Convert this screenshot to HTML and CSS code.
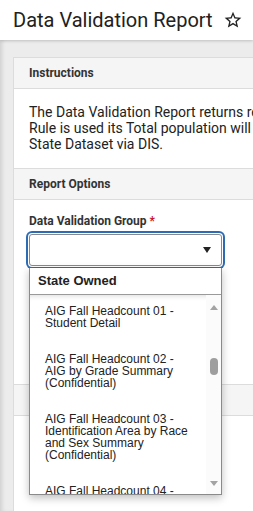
FILE: index.html
```html
<!DOCTYPE html>
<html lang="en">
<head>
    <meta charset="UTF-8">
    <title>Data Validation Report</title>
    <link rel="stylesheet" href="styles.css">
</head>
<body>
    <div class="header">
        <h1>Data Validation Report</h1>
        <svg class="star" viewBox="0 0 24 24" width="20" height="20">
            <path d="M22 9.24l-7.19-.62L12 2 9.19 8.63 2 9.24l5.46 4.73L5.82 21 12 17.27 18.18 21l-1.63-7.03L22 9.24zM12 15.4l-3.76 2.27 1-4.28-3.32-2.88 4.38-.38L12 6.1l1.71 4.04 4.38.38-3.32 2.88 1 4.28L12 15.4z" fill="#222"/>
        </svg>
    </div>

    <div class="main">
        <div class="card">
            <div class="section-head">Instructions</div>
            <div class="instructions">
                The Data Validation Report returns results for the selected group. When a<br>
                Rule is used its Total population will be compared against the<br>
                State Dataset via DIS.
            </div>

            <div class="section-head">Report Options</div>
            <div class="options">
                <label class="field-label">Data Validation Group <span class="req">*</span></label>
                <div class="select-wrap">
                    <div class="select"><span class="caret"></span></div>

                    <!-- open dropdown -->
                    <div class="dropdown">
                        <div class="group-head">State Owned</div>
                        <div class="list-row">
                            <ul class="list">
                                <li>AIG Fall Headcount 01 -<br>Student Detail</li>
                                <li>AIG Fall Headcount 02 -<br>AIG by Grade Summary<br>(Confidential)</li>
                                <li>AIG Fall Headcount 03 -<br>Identification Area by Race<br>and Sex Summary<br>(Confidential)</li>
                                <li>AIG Fall Headcount 04 -<br>AIG by School Summary</li>
                            </ul>
                            <div class="scrollbar">
                                <span class="arrow up"></span>
                                <span class="thumb"></span>
                                <span class="arrow down"></span>
                            </div>
                        </div>
                    </div>
                </div>
            </div>

            <div class="section-head">Report Format</div>
            <div class="format"></div>
        </div>
    </div>
</body>
</html>
```

FILE: styles.css
```css
*{
    margin: 0;
    padding: 0;
    box-sizing: border-box;
}

body{
    width: 253px;
    height: 511px;
    overflow: hidden;
    background: #ececec;
    font-family: Roboto, 'Liberation Sans', sans-serif;
    color: #222;
}

.header{
    position: relative;
    z-index: 1;
    height: 40px;
    background: #fff;
    padding-left: 13px;
    display: flex;
    align-items: center;
    box-shadow: 0 1px 3px rgba(0,0,0,.18);
}

.header h1{
    font-size: 20px;
    font-weight: 400;
    color: #212121;
    white-space: nowrap;
}

.star{
    margin-left: 10px;
    flex-shrink: 0;
}

.main{
    height: 471px;
    padding: 17px 0 0 13px;
    box-shadow: inset 4px 0 4px -2px rgba(0,0,0,.12);
}

.card{
    width: 420px;
    background: #fff;
    border: 1px solid #dcdcdc;
}

.section-head{
    height: 31px;
    line-height: 30px;
    padding-left: 15px;
    background: #f5f5f5;
    border-bottom: 1px solid #dcdcdc;
    font-size: 12px;
    font-weight: 700;
    color: #333;
}

.instructions{
    padding: 15px 0 16px 15px;
    font-size: 14px;
    line-height: 16px;
    white-space: nowrap;
    border-bottom: 1px solid #dcdcdc;
}

.options{
    padding: 14px 0 0 15px;
    height: 185px;
    border-bottom: 1px solid #dcdcdc;
}

.field-label{
    display: block;
    font-size: 12px;
    font-weight: 700;
    line-height: 14px;
    color: #333;
    margin-bottom: 6px;
}

.req{
    color: #c8102e;
}

.select-wrap{
    position: relative;
    width: 193px;
}

.select{
    height: 32px;
    border: 1px solid #8a8a8a;
    border-radius: 3px;
    background: #fff;
    box-shadow: 0 0 0 1px #fff, 0 0 0 3px #2d6cb5;
    display: flex;
    align-items: center;
    justify-content: flex-end;
    padding-right: 10px;
}

.caret{
    width: 0;
    height: 0;
    border-left: 4px solid transparent;
    border-right: 4px solid transparent;
    border-top: 6px solid #222;
}

/* native-looking popup list */
.dropdown{
    position: absolute;
    top: 34px;
    left: 0;
    width: 193px;
    height: 227px;
    background: #fff;
    border: 1px solid #8a8a8a;
    border-top: none;
    box-shadow: 0 3px 8px rgba(0,0,0,.25);
    display: flex;
    flex-direction: column;
    font-family: 'Liberation Sans', Arial, sans-serif;
}

.group-head{
    height: 27px;
    line-height: 25px;
    padding-left: 8px;
    font-size: 13px;
    font-weight: 700;
    color: #222;
    border-bottom: 1px solid #9a9a9a;
}

.list-row{
    flex: 1;
    display: flex;
    overflow: hidden;
    box-shadow: inset 0 6px 6px -6px rgba(0,0,0,.18);
}

.list{
    flex: 1;
    list-style: none;
    overflow: hidden;
}

.list li{
    padding: 10px 0 14px 15px;
    font-size: 12px;
    line-height: 12px;
    white-space: nowrap;
    color: #222;
}

.scrollbar{
    width: 15px;
    background: #fbfbfb;
    display: flex;
    flex-direction: column;
    align-items: center;
    padding: 10px 0 8px;
}

.arrow{
    width: 0;
    height: 0;
    border-left: 4px solid transparent;
    border-right: 4px solid transparent;
}

.arrow.up{
    border-bottom: 5px solid #a3a3a3;
}

.arrow.down{
    margin-top: auto;
    border-top: 5px solid #a3a3a3;
}

.thumb{
    width: 8px;
    height: 17px;
    margin-top: 48px;
    border-radius: 4px;
    background: #9e9e9e;
}

.format{
    height: 120px;
}
```
